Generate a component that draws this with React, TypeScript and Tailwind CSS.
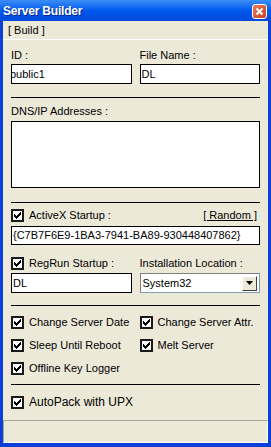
import React from 'react';

function Check({ className = '' }: { className?: string }) {
  return (
    <span className={`inline-flex items-center justify-center w-[13px] h-[13px] border-2 border-[#1a1a1a] bg-white shrink-0 ${className}`}>
      <svg width="7" height="7" viewBox="0 0 7 7" shapeRendering="crispEdges">
        <path
          fill="#000"
          d="M6 0h1v3H6zM5 1h1v3H5zM4 2h1v3H4zM3 3h1v3H3zM2 4h1v3H2zM1 3h1v3H1zM0 2h1v3H0z"
        />
      </svg>
    </span>
  );
}

function CheckRow({ label, className = '' }: { label: string; className?: string }) {
  return (
    <label className={`flex items-center gap-[5px] h-[13px] ${className}`}>
      <Check />
      <span className="leading-[13px] whitespace-nowrap">{label}</span>
    </label>
  );
}

function Field({ value, className = '' }: { value: string; className?: string }) {
  return (
    <div className={`bg-white border border-black overflow-hidden flex items-center whitespace-nowrap ${className}`}>
      <span className="pl-px">{value}</span>
    </div>
  );
}

function Sep({ className = '' }: { className?: string }) {
  return <div className={`h-px bg-black ${className}`} />;
}

export default function App() {
  return (
    <div className="w-[271px] h-[447px] bg-[#0a3fd8] flex flex-col text-[11px] text-black font-['Liberation_Sans',Arial,sans-serif] overflow-hidden">
      {/* Title bar */}
      <div className="h-[21px] shrink-0 flex items-center justify-between pl-[3px] pr-[4px] bg-gradient-to-b from-[#3b8ef6] via-[#0058ee] to-[#0049dc]">
        <span className="text-white font-bold text-[12px] tracking-[-0.2px] [text-shadow:1px_1px_0_#0a2a8a]">
          Server Builder
        </span>
        <span className="w-[15px] h-[15px] mt-[1px] rounded-[3px] border border-white bg-gradient-to-br from-[#ec7a57] to-[#c8401c] flex items-center justify-center">
          <svg width="9" height="9" viewBox="0 0 9 9">
            <path d="M1.5 1.5 7.5 7.5M7.5 1.5 1.5 7.5" stroke="#fff" strokeWidth="2" />
          </svg>
        </span>
      </div>

      <div className="flex-1 mx-[3px] mb-[4px] bg-[#ece9d8] flex flex-col">
        {/* Menu */}
        <div className="h-[19px] shrink-0 flex items-center pl-[5px] border-b border-white">
          <span>[ Build ]</span>
        </div>

        <div className="px-2 flex flex-col">
          <div className="grid grid-cols-2 gap-x-2 pt-[9px]">
            <span className="leading-[13px]">ID :</span>
            <span className="leading-[13px]">File Name :</span>
            <div className="mt-[2px] h-[20px] bg-white border border-black overflow-hidden flex items-center whitespace-nowrap">
              <span className="ml-[-2px]">public1</span>
            </div>
            <Field value="DL" className="mt-[2px] h-[20px]" />
          </div>

          <Sep className="mt-[13px]" />

          <span className="mt-[7px] leading-[13px]">DNS/IP Addresses :</span>
          <div className="mt-[3px] h-[67px] bg-white border border-black" />

          <Sep className="mt-[14px]" />

          <div className="mt-[6px] flex items-center justify-between">
            <CheckRow label="ActiveX Startup :" />
            <span className="underline leading-[13px] pr-[3px]">[ Random ]</span>
          </div>
          <Field value="{C7B7F6E9-1BA3-7941-BA89-930448407862}" className="mt-[4px] h-[19px]" />

          <div className="grid grid-cols-2 gap-x-2 mt-[12px]">
            <CheckRow label="RegRun Startup :" />
            <span className="leading-[13px]">Installation Location :</span>
            <Field value="DL" className="mt-[3px] h-[20px]" />
            <div className="mt-[3px] h-[20px] bg-white border border-[#7f9db9] flex items-center justify-between pr-[2px] border-l-[#808080] border-t-[#808080]">
              <span className="pl-[2px]">System32</span>
              <span className="w-[15px] h-[15px] bg-[#ece9d8] border border-t-white border-l-white border-b-[#404040] border-r-[#404040] flex items-center justify-center">
                <svg width="7" height="4" viewBox="0 0 7 4">
                  <path d="M0 0h7L3.5 4z" fill="#000" />
                </svg>
              </span>
            </div>
          </div>

          <Sep className="mt-[12px]" />

          <div className="grid grid-cols-2 gap-x-2 mt-[10px] gap-y-[10px]">
            <CheckRow label="Change Server Date" />
            <CheckRow label="Change Server Attr." />
            <CheckRow label="Sleep Until Reboot" />
            <CheckRow label="Melt Server" />
            <CheckRow label="Offline Key Logger" />
          </div>

          <Sep className="mt-[9px]" />

          <label className="mt-[11px] flex items-center gap-[5px] h-[13px]">
            <Check />
            <span className="text-[12px] leading-[13px]">AutoPack with UPX</span>
          </label>
        </div>

        {/* Status bar */}
        <div className="mt-auto h-[23px] border-t border-l border-t-[#aca899] border-l-[#aca899] border-b border-r border-b-white border-r-white" />
      </div>
    </div>
  );
}
